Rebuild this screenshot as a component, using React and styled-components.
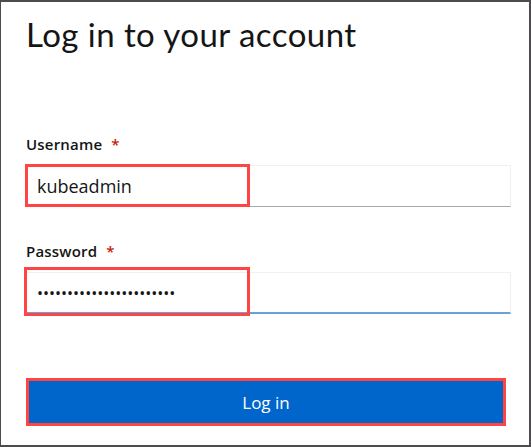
import React from 'react'
import styled, { createGlobalStyle } from 'styled-components'

const GlobalStyle = createGlobalStyle`
  html, body {
    margin: 0;
    padding: 0;
    background: #ffffff;
  }
  * {
    box-sizing: border-box;
  }
`

const App = () => {
  return (
    <>
      <GlobalStyle />
      <Frame>
        <Title>Log in to your account</Title>
        <Form onSubmit={(e) => e.preventDefault()}>
          <Label htmlFor='username'>
            Username<Required>*</Required>
          </Label>
          <Field>
            <TextInput id='username' type='text' defaultValue='kubeadmin' />
            <Highlight $top={-1} $left={-1} $width={225} $height={43} />
          </Field>
          <Label htmlFor='password' $gap={34}>
            Password<Required>*</Required>
          </Label>
          <Field>
            <TextInput
              id='password'
              type='password'
              defaultValue='kubeadmin-password-1234'
              $focused
            />
            <Highlight $top={-5} $left={-2} $width={226} $height={49} />
          </Field>
          <SubmitButton type='submit'>Log in</SubmitButton>
        </Form>
      </Frame>
    </>
  )
}

export default App

const Frame = styled.div`
  width: 531px;
  height: 447px;
  border: 2px solid #4e4b4f;
  border-left-width: 1px;
  padding: 12px 0 0 25px;
  background: #fff;
  overflow: hidden;
`

const Title = styled.h1`
  margin: 0;
  font-family: Lato, "Noto Sans", sans-serif;
  font-weight: 400;
  font-size: 33px;
  letter-spacing: 0.45px;
  line-height: 40px;
  color: #151515;
`

const Form = styled.form`
  display: flex;
  flex-direction: column;
  margin-top: 80px;
`

const Label = styled.label`
  display: block;
  margin-top: ${(p) => (p.$gap ? `${p.$gap}px` : '0')};
  margin-bottom: 11px;
  font-family: "Open Sans", sans-serif;
  font-weight: 600;
  font-size: 15px;
  letter-spacing: 0.2px;
  line-height: 20px;
  color: #151515;
`

const Required = styled.span`
  margin-left: 9px;
  color: #c9190b;
`

const Field = styled.div`
  position: relative;
  width: 485px;
`

const TextInput = styled.input`
  display: block;
  width: 100%;
  height: 42px;
  margin: 0;
  padding: 0 10px;
  border: 1px solid #f0f0f0;
  border-bottom: ${(p) => (p.$focused ? '2px solid #6aa0de' : '1px solid #a7a9ab')};
  border-radius: 0;
  background: #fff;
  font-family: "Open Sans", sans-serif;
  font-size: ${(p) => (p.type === 'password' ? '16px' : '18px')};
  color: #151515;
  outline: none;
`

const Highlight = styled.div`
  position: absolute;
  top: ${(p) => p.$top}px;
  left: ${(p) => p.$left}px;
  width: ${(p) => p.$width}px;
  height: ${(p) => p.$height}px;
  border: 3px solid #ff4444;
  pointer-events: none;
`

const SubmitButton = styled.button`
  width: 474px;
  height: 42px;
  margin: 67px 0 0 3px;
  border: none;
  border-radius: 0;
  outline: 3px solid #ff4444;
  background: #0066cc;
  color: #fff;
  font-family: "Open Sans", sans-serif;
  font-size: 17px;
  cursor: pointer;
`
